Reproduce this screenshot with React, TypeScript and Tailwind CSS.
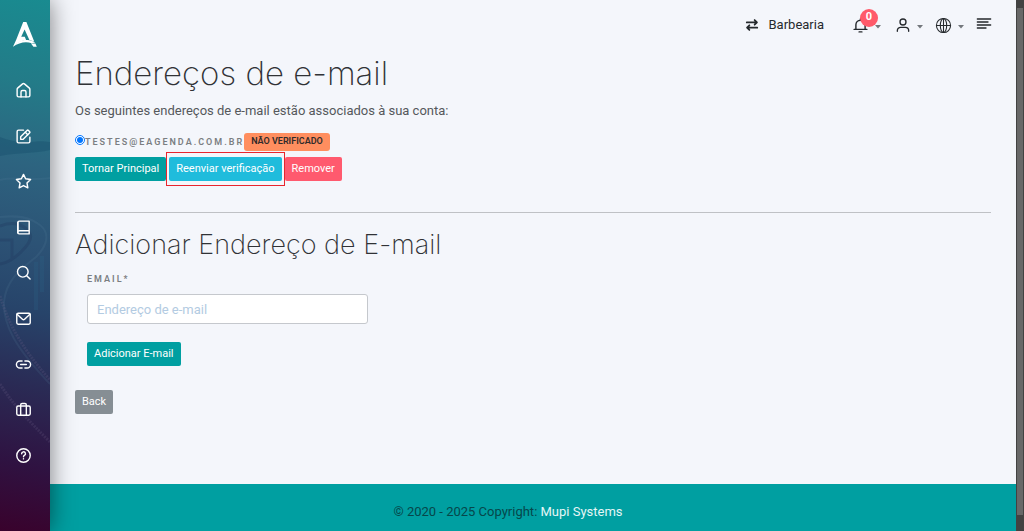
import type { ReactNode } from "react";

const iconPaths: Record<string, ReactNode> = {
  home: (
    <>
      <path d="M3 10.200a2 2 0 0 1 .7-1.500l7-6a2 2 0 0 1 2.600 0l7 6a2 2 0 0 1 .7 1.500V19a2 2 0 0 1-2 2H5a2 2 0 0 1-2-2z" />
      <path d="M8.500 21v-7a2 2 0 0 1 2-2h3a2 2 0 0 1 2 2v7" />
    </>
  ),
  edit: (
    <>
      <path d="M12 3H5a2 2 0 0 0-2 2v14a2 2 0 0 0 2 2h14a2 2 0 0 0 2-2v-6" />
      <path d="M8 12.500V16h3.500l9.300-9.300a1 1 0 0 0 0-1.400l-2.100-2.100a1 1 0 0 0-1.400 0z" />
      <path d="m14.500 6 3.500 3.500" />
    </>
  ),
  star: <path d="m12 2 3 6.200 7 1-5.100 4.800 1.200 7-6.100-3.300L5.900 21l1.200-7L2 9.200l7-1z" />,
  book: (
    <>
      <path d="M4 19V5a2 2 0 0 1 2-2h14v18H6a2 2 0 0 1 0-4.500h14" />
      <path d="M4 19V5" />
    </>
  ),
  search: (
    <>
      <circle cx="11" cy="11" r="7.500" />
      <path d="m16.500 16.500 4.800 4.800" />
    </>
  ),
  mail: (
    <>
      <rect x="2.500" y="4.500" width="19" height="15.500" rx="2" />
      <path d="m3 6 7.500 7a2.200 2.200 0 0 0 3 0L21 6" />
    </>
  ),
  link: (
    <>
      <path d="M10 17H7A5 5 0 0 1 7 7h3" />
      <path d="M14 7h3a5 5 0 0 1 0 10h-3" />
      <path d="M8 12h8" />
    </>
  ),
  suitcase: (
    <>
      <rect x="2.500" y="7" width="19" height="13" rx="2" />
      <path d="M8 20V5.500a2 2 0 0 1 2-2h4a2 2 0 0 1 2 2V20" />
    </>
  ),
  help: (
    <>
      <circle cx="12" cy="12" r="9.500" />
      <path d="M9.400 9.500a2.700 2.700 0 1 1 3.900 2.400c-.8.400-1.300.9-1.300 1.800" />
      <path d="M12 16.600v.2" />
    </>
  ),
  exchange: (
    <>
      <path d="M3 7.500h17M16.500 3.500l4 4-4 4" />
      <path d="M21 16.500H4M7.500 12.500l-4 4 4 4" />
    </>
  ),
  bell: (
    <>
      <path d="M5.500 17.500V11a6.500 6.500 0 0 1 13 0v6.500" />
      <path d="M12 4.500v-2M3 17.500h18M10 21h4" />
    </>
  ),
  user: (
    <>
      <circle cx="12" cy="7.500" r="4.500" />
      <path d="M3.500 21.500v-1a5 5 0 0 1 5-5h7a5 5 0 0 1 5 5v1" />
    </>
  ),
  globe: (
    <>
      <circle cx="12" cy="12" r="10" />
      <ellipse cx="12" cy="12" rx="4.500" ry="10" />
      <path d="M12 2v20M2 12h20" />
    </>
  ),
  align: <path d="M2 3h20M2 7.500h16M2 12h20M2 16.500h13" />,
};

function Icon({ name, className }: { name: string; className: string }) {
  return (
    <svg
      viewBox="0 0 24 24"
      fill="none"
      stroke="currentColor"
      strokeWidth="2"
      strokeLinecap="round"
      strokeLinejoin="round"
      className={className}
      aria-hidden="true"
    >
      {iconPaths[name]}
    </svg>
  );
}

const navItems = [
  { icon: "home", label: "Início" },
  { icon: "edit", label: "Editar" },
  { icon: "star", label: "Favoritos" },
  { icon: "book", label: "Cadastros" },
  { icon: "search", label: "Buscar" },
  { icon: "mail", label: "Mensagens" },
  { icon: "link", label: "Links" },
  { icon: "suitcase", label: "Serviços" },
  { icon: "help", label: "Ajuda" },
];

function SidebarArt() {
  return (
    <svg
      viewBox="0 0 50 531"
      preserveAspectRatio="none"
      className="absolute inset-0 h-full w-full"
      fill="none"
      aria-hidden="true"
    >
      <path d="M0 137c10 4 20 6 30 5s12-1 20 0v8c-16 4-30 2-50 6z" fill="#174e6c" opacity=".4" />
      <path d="M0 180c15-4 32 1 50-2M0 217c18-2 30 0 40 8s8 20-4 32C20 270 6 280 4 302c-1 24 12 46 46 82" stroke="#5f87a0" opacity=".15" strokeWidth="2" />
      <path d="M0 226c16-6 26 0 30 8S14 262 0 264M0 240h12v18" stroke="#1c3058" opacity=".25" strokeWidth="3" />
      <path d="M0 296c8 26 20 50 50 84M0 384c14 22 28 36 50 58" stroke="#7a6b93" opacity=".2" strokeWidth="3" strokeDasharray="2 1" />
      <path d="M36 262v48M42 256v36" stroke="#2c6386" opacity=".25" strokeWidth="4" />
    </svg>
  );
}

function Sidebar() {
  return (
    <aside className="sticky top-0 z-10 h-screen w-[50px] shrink-0 bg-[linear-gradient(192deg,#198b90_0%,#237b88_16%,#2d6480_31%,#2c5275_46%,#27446a_58%,#2a2b55_72%,#2f1241_87%,#39022c_100%)] shadow-[0_0_24px_rgba(0,0,0,0.5)]">
      <SidebarArt />
      <div className="relative flex flex-col items-center">
        <a href="#" aria-label="eAgenda" className="flex h-[68px] items-center text-white">
          <svg viewBox="0 0 24 25" className="h-[25px] w-6" fill="currentColor" aria-hidden="true">
            <path d="M10.200 0h3.200l7.800 19.600-4.800-1.600L11.600 7.400 8.200 14.800h3.600l1.400 3.400C8.600 18.600 4.400 20.600 0 24.800l3.200-7z" />
            <path d="M0 24.800c3.800-5 9-7.200 14.600-6.800 2.700.2 5.200 1 7.600 2.600l-3.400.6c-6-2-12.800-.8-18.800 3.600zM18 21.600h4.400l1.400 3.200h-3.400z" />
          </svg>
        </a>
        <nav className="grid h-[410px] w-full grid-rows-9">
          {navItems.map((item) => (
            <a
              key={item.icon}
              href="#"
              aria-label={item.label}
              className="flex items-center justify-center pr-[3px] text-white"
            >
              <Icon name={item.icon} className="h-[17px] w-[17px]" />
            </a>
          ))}
        </nav>
      </div>
    </aside>
  );
}

function Caret() {
  return (
    <svg viewBox="0 0 6 4" className="mt-1 h-1 w-1.5" fill="#74787d" aria-hidden="true">
      <path d="M0 0h6L3 3.500z" />
    </svg>
  );
}

function Topbar() {
  return (
    <header className="flex h-[50px] items-center justify-end pr-6 text-[#25292d]">
      <a href="#" className="mr-7 flex items-center gap-2.5 text-[13px]">
        <Icon name="exchange" className="h-3.5 w-3.5 stroke-3" />
        Barbearia
      </a>
      <button type="button" aria-label="Notificações" className="relative mr-3.5 flex items-center gap-1.5">
        <Icon name="bell" className="h-[17px] w-[17px]" />
        <Caret />
        <span className="absolute -top-2 left-2 flex h-[18px] w-[18px] items-center justify-center rounded-full bg-[#ff5a6a] text-[11px] font-bold text-white">
          0
        </span>
      </button>
      <button type="button" aria-label="Conta" className="mr-3 flex items-center gap-1.5">
        <Icon name="user" className="h-4 w-4" />
        <Caret />
      </button>
      <button type="button" aria-label="Idioma" className="mr-3 flex items-center gap-1.5">
        <Icon name="globe" className="h-[17px] w-[17px] stroke-[1.500]" />
        <Caret />
      </button>
      <button type="button" aria-label="Menu">
        <Icon name="align" className="h-4 w-4" />
      </button>
    </header>
  );
}

const btn = "h-6 rounded-[2px] px-[7px] text-[11px] leading-4 whitespace-nowrap text-white";

export default function App() {
  return (
    <div className="flex min-h-screen bg-[#f4f6fb] font-[Roboto,sans-serif]">
      <Sidebar />
      <div className="flex min-w-0 flex-1 flex-col">
        <Topbar />
        <main className="flex-1 px-[25px] text-[#55585c]">
          <h1 className="pt-[3px] font-[Inter,sans-serif] text-[33px] leading-10 font-extralight text-[#303236]">
            Endereços de e-mail
          </h1>
          <p className="mt-2.5 text-[13px] leading-4">Os seguintes endereços de e-mail estão associados à sua conta:</p>

          <form onSubmit={(e) => e.preventDefault()}>
            <div className="mt-3.5 flex h-[18px] items-center">
              <input
                type="radio"
                id="email-1"
                name="email"
                defaultChecked
                className="mb-1 h-2.5 w-2.5 accent-[#0075ff]"
              />
              <label htmlFor="email-1" className="text-[9px] leading-4 font-semibold tracking-[2px] text-[#7b7e82] uppercase">
                testes@eagenda.com.br
              </label>
              <span className="flex h-[18px] items-center rounded-[3px] bg-[#ff8e5f] px-[7px] text-[9px] font-semibold text-[#302b2b]">
                NÃO VERIFICADO
              </span>
            </div>
            <div className="mt-px flex items-center">
              <button type="submit" className={`${btn} bg-[#009fa1]`}>Tornar Principal</button>
              <span className="border border-[#e8252e] px-0.5 py-1">
                <button type="submit" className={`${btn} block bg-[#1fbcdc]`}>Reenviar verificação</button>
              </span>
              <button type="submit" className={`${btn} bg-[#ff5a6e]`}>Remover</button>
            </div>
          </form>

          <hr className="mt-[26px] border-[#bfc1c5]" />

          <h2 className="mt-4 font-[Inter,sans-serif] text-[27px] leading-8 font-extralight text-[#303236]">
            Adicionar Endereço de E-mail
          </h2>
          <form className="mt-3 flex flex-col items-start px-3" onSubmit={(e) => e.preventDefault()}>
            <label htmlFor="new-email" className="text-[9px] leading-3 font-semibold tracking-[2px] text-[#7b7e82] uppercase">
              Email*
            </label>
            <input
              id="new-email"
              type="email"
              placeholder="Endereço de e-mail"
              className="mt-[9px] h-[30px] w-[281px] rounded-[3px] border border-[#c5c8cd] bg-white px-[9px] text-[13px] outline-none placeholder:text-[#b3cbe2]"
            />
            <button type="submit" className={`${btn} mt-[18px] bg-[#009fa1]`}>Adicionar E-mail</button>
          </form>
          <button type="button" className={`${btn} mt-6 bg-[#868e94]`}>Back</button>
        </main>
        <footer className="flex h-[47px] items-center justify-center bg-[#009fa1] pt-2 pr-[50px] text-[13px] text-[#06474b]">
          <p>
            © 2020 - 2025 Copyright: <a href="#" className="text-[#e5f6f6]">Mupi Systems</a>
          </p>
        </footer>
      </div>
      <div className="sticky top-0 flex h-screen w-2 shrink-0 flex-col items-center bg-[#424242] py-2" aria-hidden="true">
        <div className="w-1.5 flex-1 bg-[#686868]" />
        <div className="h-2" />
      </div>
    </div>
  );
}
